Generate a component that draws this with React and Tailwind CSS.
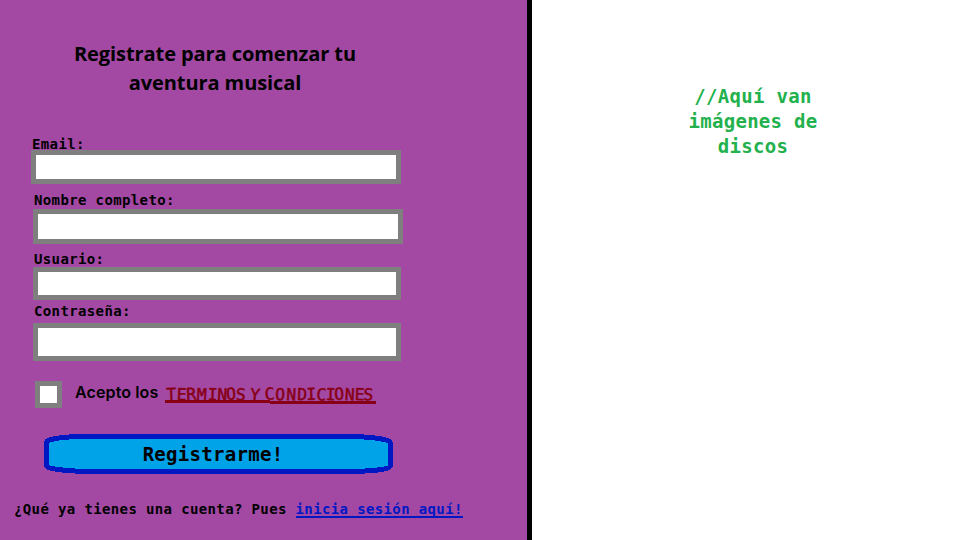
const mono = "font-['DejaVu_Sans_Mono',monospace] font-bold";
const label = `${mono} text-[14px] tracking-[0.37px] whitespace-pre`;

function Field({ name, labelClass, inputClass }) {
  return (
    <label className="block">
      <span className={`block h-4 ${label} ${labelClass}`}>{name}</span>
      <input className={`block border-5 border-[#7f7f7f] bg-white outline-none ${inputClass}`} />
    </label>
  );
}

function Terms() {
  return (
    <svg width="212" height="24" viewBox="165 382 212 24" className="block" fill="#880015">
      <text
        y="400"
        x="166.5 176.5 186.5 196.5 207.5 217 226.5 235.5 245 249.5 258 265 275 286 297 306.5 316 325.5 334.5 344.5 354.5 363"
        rotate="-2 2 -3 3 2 3 -4 4 0 6 0 -4 2 3 2 -2 4 2 -3 3 2 4"
        fontFamily="'DejaVu Sans Mono', monospace"
        fontSize="16.5"
        stroke="#880015"
        strokeWidth="0.5"
      >
        TERMINOS Y CONDICIONES
      </text>
      <path d="M165 400h105v1h106v3H270v-1H165z" />
    </svg>
  );
}

export default function App() {
  return (
    <div className="flex h-[540px] w-[960px] overflow-hidden bg-white text-black">
      <main className="h-full w-[532px] shrink-0 border-r-5 border-black bg-[#a349a4]">
        <h1 className="w-[430px] pt-[39px] text-center font-['Open_Sans',sans-serif] text-[20px] leading-[29px] font-bold tracking-[-0.08px]">
          Registrate para comenzar tu
          <br />
          aventura musical
        </h1>
        <form className="mt-[37px]" onSubmit={(e) => e.preventDefault()}>
          <Field name="Email:" labelClass="ml-8 leading-5" inputClass="ml-[31px] h-[34px] w-[370px]" />
          <div className="mt-2">
            <Field name="Nombre completo:" labelClass="ml-[34px] leading-4" inputClass="mt-px ml-[33px] h-[35px] w-[370px]" />
          </div>
          <div className="mt-[7px]">
            <Field name="Usuario:" labelClass="ml-[34px] leading-4" inputClass="ml-[33px] h-[33px] w-[368px]" />
          </div>
          <div className="mt-[3px]">
            <Field name="Contraseña:" labelClass="ml-[34px] leading-4" inputClass="mt-1 ml-[33px] h-[38px] w-[368px]" />
          </div>
          <div className="mt-5 ml-[35px] flex h-[27px] items-start">
            <input type="checkbox" className="size-[27px] appearance-none border-5 border-[#7f7f7f] bg-white" />
            <span className="ml-[13px] w-[90px] font-['Inter',sans-serif] text-[16px] leading-[22px] font-semibold tracking-[0.12px] whitespace-nowrap">
              Acepto los
            </span>
            <a href="#terminos" className="mt-px">
              <Terms />
            </a>
          </div>
          <button className="relative mt-[26px] ml-11 block h-10 w-[349px]">
            <svg className="absolute inset-0" width="349" height="40" viewBox="44 434 349 40">
              <path
                d="M46.5 443Q46.5 440.5 51 439.5Q63 436.5 83 436.5H353Q374 437 385 439.7Q390.5 441 390.5 444V465Q390.5 468 384 469Q371 471.5 346 471.5H89Q64 471 52 468.5Q46.5 467.5 46.5 465Z"
                fill="#00a2e8"
                stroke="#0018c4"
                strokeWidth="5"
                shapeRendering="crispEdges"
              />
            </svg>
            <span className={`relative block pr-[11px] text-center text-[19px] leading-10 tracking-[0.29px] ${mono}`}>
              Registrarme!
            </span>
          </button>
        </form>
        <p className={`mt-[26px] ml-[14px] leading-[18px] ${label}`}>
          {"¿Qué ya tienes una cuenta? Pues "}
          <a href="#login" className="inline-block h-[18px] border-b-2 border-[#0018c4] text-[#0018c4]">
            inicia sesión aquí!
          </a>
        </p>
      </main>
      <aside className={`flex-1 pt-[84px] pl-[14px] text-center text-[19px] leading-[25px] tracking-[0.29px] text-[#22b14c] ${mono}`}>
        //Aquí van
        <br />
        imágenes de
        <br />
        discos
      </aside>
    </div>
  );
}
